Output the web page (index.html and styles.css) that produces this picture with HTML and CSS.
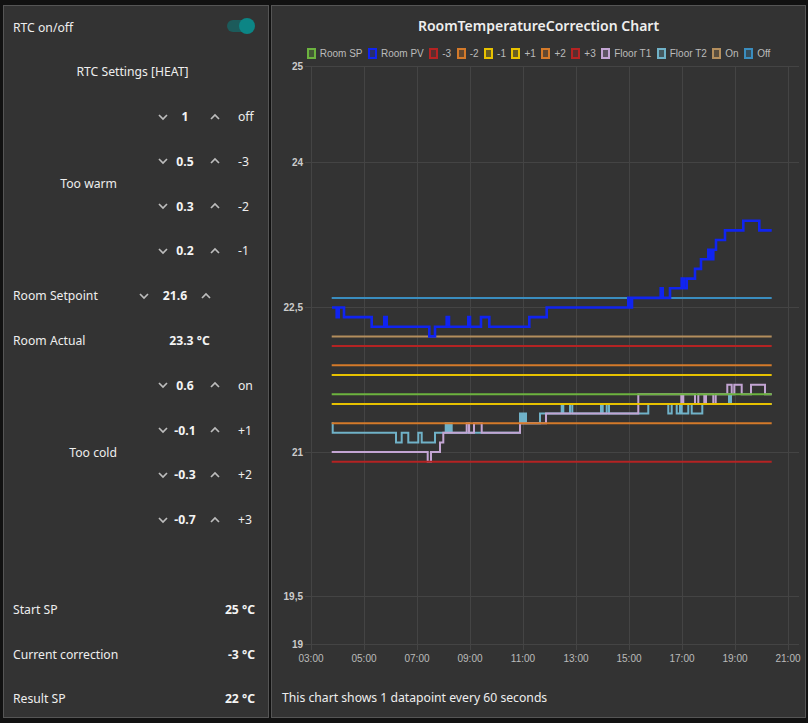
FILE: index.html
```html
<!DOCTYPE html>
<html lang="en">
<head>
<meta charset="utf-8">
<title>RTC</title>
<link rel="stylesheet" href="styles.css">
</head>
<body>
<div class="dash">
  <section class="card controls">
    <div class="row span between">
      <span>RTC on/off</span>
      <span class="toggle"><span class="track"></span><span class="knob"></span></span>
    </div>
    <div class="row span section-title">RTC Settings [HEAT]</div>
    <div class="group-label warm">Too warm</div>
    <div class="step">
      <svg class="chev" viewBox="0 0 18 10"><polyline points="5,3 9,7 13,3"/></svg>
      <span class="val">1</span>
      <svg class="chev" viewBox="0 0 18 10"><polyline points="5,7 9,3 13,7"/></svg>
      <span class="tag">off</span>
    </div>
    <div class="step">
      <svg class="chev" viewBox="0 0 18 10"><polyline points="5,3 9,7 13,3"/></svg>
      <span class="val">0.5</span>
      <svg class="chev" viewBox="0 0 18 10"><polyline points="5,7 9,3 13,7"/></svg>
      <span class="tag">-3</span>
    </div>
    <div class="step">
      <svg class="chev" viewBox="0 0 18 10"><polyline points="5,3 9,7 13,3"/></svg>
      <span class="val">0.3</span>
      <svg class="chev" viewBox="0 0 18 10"><polyline points="5,7 9,3 13,7"/></svg>
      <span class="tag">-2</span>
    </div>
    <div class="step">
      <svg class="chev" viewBox="0 0 18 10"><polyline points="5,3 9,7 13,3"/></svg>
      <span class="val">0.2</span>
      <svg class="chev" viewBox="0 0 18 10"><polyline points="5,7 9,3 13,7"/></svg>
      <span class="tag">-1</span>
    </div>
    <div class="row span">
      <span class="sp-label">Room Setpoint</span>
      <svg class="chev" viewBox="0 0 18 10"><polyline points="5,3 9,7 13,3"/></svg>
      <span class="val sp-val">21.6</span>
      <svg class="chev" viewBox="0 0 18 10"><polyline points="5,7 9,3 13,7"/></svg>
    </div>
    <div class="row span">
      <span class="act-label">Room Actual</span>
      <span class="val act-val">23.3 °C</span>
    </div>
    <div class="group-label cold">Too cold</div>
    <div class="step">
      <svg class="chev" viewBox="0 0 18 10"><polyline points="5,3 9,7 13,3"/></svg>
      <span class="val">0.6</span>
      <svg class="chev" viewBox="0 0 18 10"><polyline points="5,7 9,3 13,7"/></svg>
      <span class="tag">on</span>
    </div>
    <div class="step">
      <svg class="chev" viewBox="0 0 18 10"><polyline points="5,3 9,7 13,3"/></svg>
      <span class="val">-0.1</span>
      <svg class="chev" viewBox="0 0 18 10"><polyline points="5,7 9,3 13,7"/></svg>
      <span class="tag">+1</span>
    </div>
    <div class="step">
      <svg class="chev" viewBox="0 0 18 10"><polyline points="5,3 9,7 13,3"/></svg>
      <span class="val">-0.3</span>
      <svg class="chev" viewBox="0 0 18 10"><polyline points="5,7 9,3 13,7"/></svg>
      <span class="tag">+2</span>
    </div>
    <div class="step">
      <svg class="chev" viewBox="0 0 18 10"><polyline points="5,3 9,7 13,3"/></svg>
      <span class="val">-0.7</span>
      <svg class="chev" viewBox="0 0 18 10"><polyline points="5,7 9,3 13,7"/></svg>
      <span class="tag">+3</span>
    </div>
    <div class="span"></div>
    <div class="row span between"><span>Start SP</span><span class="val-r">25 °C</span></div>
    <div class="row span between"><span>Current correction</span><span class="val-r">-3 °C</span></div>
    <div class="row span between"><span>Result SP</span><span class="val-r">22 °C</span></div>
  </section>

  <section class="card chart">
    <div class="chart-title">RoomTemperatureCorrection Chart</div>
    <div class="legend">
      <span class="item c-sp"><i class="box"></i>Room SP</span>
      <span class="item c-pv"><i class="box"></i>Room PV</span>
      <span class="item c-red"><i class="box"></i>-3</span>
      <span class="item c-org"><i class="box"></i>-2</span>
      <span class="item c-yel"><i class="box"></i>-1</span>
      <span class="item c-yel"><i class="box"></i>+1</span>
      <span class="item c-org"><i class="box"></i>+2</span>
      <span class="item c-red"><i class="box"></i>+3</span>
      <span class="item c-t1"><i class="box"></i>Floor T1</span>
      <span class="item c-t2"><i class="box"></i>Floor T2</span>
      <span class="item c-on"><i class="box"></i>On</span>
      <span class="item c-off"><i class="box"></i>Off</span>
    </div>
    <svg class="plot" viewBox="272 59 533 609" width="533" height="609">
      <g class="grid">
        <path d="M305 66.5H799M305 162.5H799M305 307.5H799M305 452.5H799M305 596.5H799M305 644.5H799"/>
        <path d="M311.5 66V650M364.5 66V650M417.5 66V650M470.5 66V650M523.5 66V650M576.5 66V650M629.5 66V650M682.5 66V650M735.5 66V650M788.5 66V650"/>
      </g>
      <g class="ytick">
        <text x="303" y="70">25</text>
        <text x="303" y="166">24</text>
        <text x="303" y="311">22,5</text>
        <text x="303" y="456">21</text>
        <text x="303" y="600">19,5</text>
        <text x="303" y="648">19</text>
      </g>
      <g class="xtick">
        <text x="311" y="662">03:00</text>
        <text x="364" y="662">05:00</text>
        <text x="417" y="662">07:00</text>
        <text x="470" y="662">09:00</text>
        <text x="523" y="662">11:00</text>
        <text x="576" y="662">13:00</text>
        <text x="629" y="662">15:00</text>
        <text x="682" y="662">17:00</text>
        <text x="735" y="662">19:00</text>
        <text x="788" y="662">21:00</text>
      </g>
      <path class="ln c-off" d="M331.7 297.9H771.7"/>
      <path class="ln c-on" d="M331.7 336.4H771.7"/>
      <path class="ln c-t2" d="M331.7 423.2H332.7V432.8H396V442.4H401.7V432.8H408.3V442.4H418.3V432.8H421.7V442.4H435V432.8H445.7V423.2H447.7V432.8H449.7V423.2H451.7V432.8H520V413.6H522V423.2H524V413.6H526V423.2H540V413.6H561.7V403.9H563.3V413.6H570V403.9H572.3V413.6H601V403.9H602.7V413.6H606.7V403.9H609V413.6H648.3V403.9H668.3V413.6H671.7V403.9H676.7V413.6H680V403.9H681.7V413.6H688.3V403.9H691.7V413.6H702.3V403.9H729V394.3H731V403.9H771.7"/>
      <path class="ln c-t1" d="M331.7 452.1H427.7V461.7H431V452.1H440V442.4H443.3V432.8H466.7V423.2H469V432.8H474V423.2H481.7V432.8H520V423.2H546V413.6H638.3V394.3H681.3V403.9H683.3V394.3H695V403.9H698.3V394.3H704.3V403.9H706V394.3H713.3V403.9H715.7V394.3H727.3V384.7H731.7V394.3H734.3V384.7H741.7V394.3H751V384.7H765V394.3H771.7"/>
      <path class="ln c-red" d="M331.7 461.7H771.7"/>
      <path class="ln c-org" d="M331.7 423.2H771.7"/>
      <path class="ln c-yel" d="M331.7 403.9H771.7"/>
      <path class="ln c-yel" d="M331.7 375H771.7"/>
      <path class="ln c-org" d="M331.7 365.3H771.7"/>
      <path class="ln c-red" d="M331.7 346.1H771.7"/>
      <path class="ln pv c-pv" d="M332 307.5H336.7V317.1H338.7V307.5H344V317.1H371.7V326.8H384.3V317.1H386.7V326.8H429.3V336.4H435V326.8H446.7V317.1H449V326.8H468.3V317.1H470V326.8H481V317.1H489.3V326.8H529.3V317.1H546.7V307.5H628.3V297.9H630V307.5H632V297.9H660.7V288.2H662.7V297.9H670V288.2H681.7V278.6H684V288.2H686.7V278.6H695V268.9H701V259.3H708.3V249.7H710.7V259.3H713.3V249.7H716V240H725V230.4H743.3V220.8H759.3V230.4H771.7"/>
      <path class="ln c-sp" d="M331.7 394.3H771.7"/>
    </svg>
    <div class="note">This chart shows 1 datapoint every 60 seconds</div>
  </section>
</div>
</body>
</html>
```

FILE: styles.css
```css
* { box-sizing: border-box; }

body {
  margin: 0;
  background: #111111;
  font-family: "Noto Sans", "Open Sans", sans-serif;
  font-size: 12.2px;
  color: #eeeeee;
}

.dash {
  display: flex;
  gap: 2px;
  height: 723px;
  padding: 5px 2px 5px 3px;
}

.card {
  background: #333333;
  border: 1px solid #555555;
}

/* ---------- left controls ---------- */
.controls {
  width: 266px;
  display: grid;
  grid-template-columns: 123px 1fr;
  grid-template-rows: repeat(16, 38px);
  row-gap: 6.8px;
  padding-top: 1px;
}

.span { grid-column: 1 / span 2; }

.row {
  display: flex;
  align-items: center;
  padding: 2px 13px 0 9px;
}

.between { justify-content: space-between; }

.section-title {
  justify-content: center;
  padding-right: 16px;
}

.group-label {
  grid-column: 1;
  display: flex;
  align-items: center;
  justify-content: flex-end;
  padding: 2px 10px 0 0;
}
.warm { grid-row: 3 / span 4; }
.cold { grid-row: 9 / span 4; }

.step {
  grid-column: 2;
  display: flex;
  align-items: center;
  padding: 2px 0 0 27px;
}

.chev {
  width: 18px;
  height: 10px;
  flex: none;
  fill: none;
  stroke: #bdbdbd;
  stroke-width: 1.7;
}

.val {
  width: 34px;
  padding-right: 8px;
  text-align: center;
  font-weight: 700;
  color: #f4f4f4;
}

.tag { margin-left: 14px; }

.sp-label { width: 122px; }
.sp-val { width: 44px; padding-right: 0; }

.act-label { width: 140px; }
.act-val { width: 73px; padding-right: 0; }

.val-r { font-weight: 700; color: #f4f4f4; }

.toggle {
  display: flex;
  align-items: center;
  width: 28px;
  height: 16px;
  margin-top: -2px;
}
.track {
  width: 20px;
  height: 12px;
  border-radius: 6px;
  background: #1c5b5b;
}
.knob {
  width: 16px;
  height: 16px;
  margin-left: -8px;
  border-radius: 50%;
  background: #0c8585;
}

/* ---------- chart ---------- */
.chart {
  flex: 1;
  display: flex;
  flex-direction: column;
}

.chart-title {
  margin-top: 10px;
  line-height: 20px;
  text-align: center;
  font-size: 14px;
  font-weight: 600;
}

.legend {
  margin-top: 11px;
  height: 12px;
  display: flex;
  justify-content: center;
  align-items: center;
  gap: 5.5px;
  font: 10px "Liberation Sans", Arial, sans-serif;
  color: #bbbbbb;
}
.item {
  display: flex;
  align-items: center;
  gap: 4px;
}
.box {
  width: 9px;
  height: 11px;
  border: 2px solid var(--c);
  background: color-mix(in srgb, var(--c) 30%, transparent);
}

.c-sp  { --c: #6cb33f; }
.c-pv  { --c: #1024f0; }
.c-red { --c: #b52323; }
.c-org { --c: #d47a2a; }
.c-yel { --c: #e8c200; }
.c-t1  { --c: #c3a5d3; }
.c-t2  { --c: #70b2c8; }
.c-on  { --c: #b38e5d; }
.c-off { --c: #3a8dbf; }

.plot { display: block; }

.grid path {
  fill: none;
  stroke: #444444;
  stroke-width: 1;
}

.ytick text {
  font: bold 10px "Liberation Sans", Arial, sans-serif;
  fill: #cccccc;
  text-anchor: end;
}
.xtick text {
  font: 10px "Liberation Sans", Arial, sans-serif;
  fill: #bbbbbb;
  text-anchor: middle;
}

.ln {
  fill: none;
  stroke: var(--c);
  stroke-width: 2;
}
.pv { stroke-width: 2.6; }

.note {
  margin-top: 20px;
  line-height: 20px;
  padding-left: 10px;
}
```
